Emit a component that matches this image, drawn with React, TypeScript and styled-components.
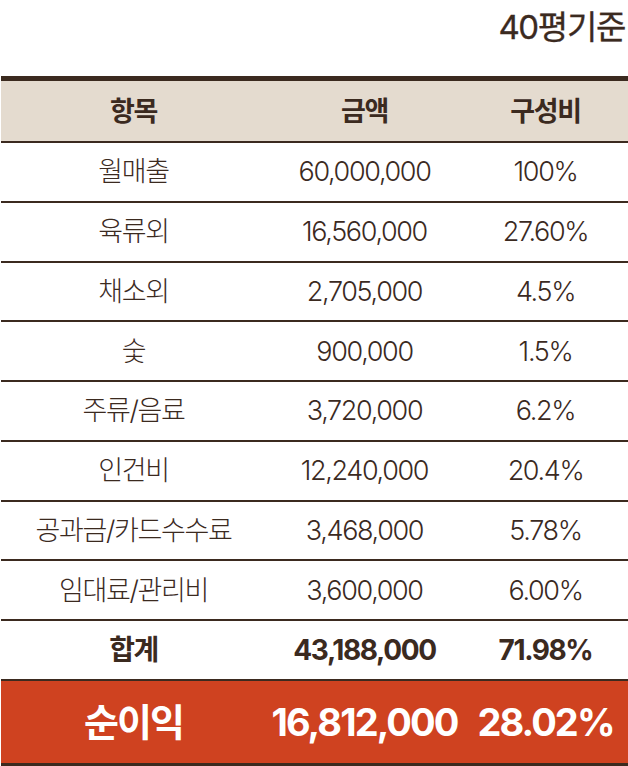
import styled, { createGlobalStyle } from 'styled-components';

const GlobalStyle = createGlobalStyle`
  html, body {
    margin: 0;
    padding: 0;
    background: #ffffff;
  }
  body {
    font-family: 'Inter', 'Noto Sans CJK KR', sans-serif;
    color: #3b2a1f;
  }
`;

const Page = styled.div`
  width: 628px;
  height: 766px;
  overflow: hidden;
`;

const TitleBar = styled.div`
  height: 76px;
  display: flex;
  align-items: center;
  justify-content: flex-end;
  padding: 0 3px 22px 0;
  box-sizing: border-box;
`;

const Title = styled.h1`
  margin: 0;
  font-size: 33px;
  font-weight: 400;
  letter-spacing: -0.04em;
  line-height: 1;
  color: #3b2a1f;
  -webkit-text-stroke: 0.3px #3b2a1f;
`;

const Table = styled.div`
  border-top: 5px solid #3b2a1f;
  margin-left: 1px;
`;

const Row = styled.div<{ $variant?: 'head' | 'body' | 'total' | 'profit' }>`
  display: grid;
  grid-template-columns: 265px 197px 1fr;
  align-items: center;
  height: ${({ $variant }) =>
    $variant === 'head' ? '60px' : $variant === 'profit' ? '82px' : '57.78px'};
  background: ${({ $variant }) =>
    $variant === 'head' ? '#e4dbcf' : $variant === 'profit' ? '#cf4220' : '#ffffff'};
  color: ${({ $variant }) => ($variant === 'profit' ? '#ffffff' : '#3b2a1f')};
  border-bottom: ${({ $variant }) => ($variant === 'profit' ? '3px' : '2px')} solid #3b2a1f;
  font-size: ${({ $variant }) =>
    $variant === 'profit' ? '38px' : $variant === 'total' ? '28px' : '27px'};
  font-weight: ${({ $variant }) => ($variant === 'body' ? 300 : 700)};
  letter-spacing: -0.05em;
`;

const Cell = styled.div`
  text-align: center;
  white-space: nowrap;
  line-height: 1;
`;

const rows = [
  ['월매출', '60,000,000', '100%'],
  ['육류외', '16,560,000', '27.60%'],
  ['채소외', '2,705,000', '4.5%'],
  ['숯', '900,000', '1.5%'],
  ['주류/음료', '3,720,000', '6.2%'],
  ['인건비', '12,240,000', '20.4%'],
  ['공과금/카드수수료', '3,468,000', '5.78%'],
  ['임대료/관리비', '3,600,000', '6.00%'],
];

export default function App() {
  return (
    <Page>
      <GlobalStyle />
      <TitleBar>
        <Title>40평기준</Title>
      </TitleBar>
      <Table>
        <Row $variant="head">
          <Cell>항목</Cell>
          <Cell>금액</Cell>
          <Cell>구성비</Cell>
        </Row>
        {rows.map(([name, amount, ratio]) => (
          <Row key={name} $variant="body">
            <Cell>{name}</Cell>
            <Cell>{amount}</Cell>
            <Cell>{ratio}</Cell>
          </Row>
        ))}
        <Row $variant="total">
          <Cell>합계</Cell>
          <Cell>43,188,000</Cell>
          <Cell>71.98%</Cell>
        </Row>
        <Row $variant="profit">
          <Cell>순이익</Cell>
          <Cell>16,812,000</Cell>
          <Cell>28.02%</Cell>
        </Row>
      </Table>
    </Page>
  );
}
